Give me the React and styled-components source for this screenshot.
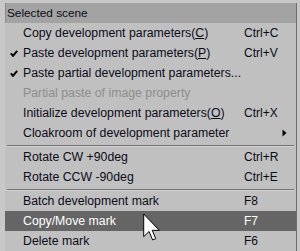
import React from "react";
import styled, { createGlobalStyle } from "styled-components";

const Global = createGlobalStyle`
  html, body { margin: 0; padding: 0; background: #c6c6c6; }
  body { font-family: "Liberation Sans", Arial, sans-serif; }
`;

const Frame = styled.div`
  position: relative;
  width: 300px;
  height: 251px;
  overflow: hidden;
  box-sizing: border-box;
  background: #c8c8c8;
  padding: 3px 3px 0 5px;
`;

const Panel = styled.div`
  display: flex;
  flex-direction: column;
  background: #c0c0c0;
  border-right: 1px solid #6e6e6e;
  height: 100%;
`;

const Header = styled.div`
  height: 20px;
  line-height: 20px;
  background: #a3a3a3;
  color: #0c0c18;
  font-size: 11.8px;
  padding-left: 2px;
  box-shadow: inset 1px 0 0 #8a8a8a;
`;

const Row = styled.div`
  display: grid;
  grid-template-columns: 18px 1fr 36px 16px;
  align-items: center;
  height: 20px;
  line-height: 20px;
  font-size: 12.3px;
  background: ${(p) => (p.$active ? "#656565" : "transparent")};
  color: ${(p) => (p.$active ? "#ffffff" : p.$disabled ? "#8e8e8e" : "#0c0c18")};
  white-space: nowrap;
`;

const CheckCell = styled.span`
  display: flex;
  align-items: center;
  padding-left: 5px;
  padding-top: 1px;
`;

const Label = styled.span``;

const Shortcut = styled.span`
  font-size: 12px;
`;

const ArrowCell = styled.span`
  display: flex;
  align-items: center;
  padding-left: 2px;
`;

const Separator = styled.div`
  height: 5px;
  display: flex;
  align-items: center;
  padding: 0 2px 0 2px;
  &::before {
    content: "";
    flex: 1;
    height: 1px;
    background: #747474;
    box-shadow: 0 1px 0 #d2d2d2;
  }
`;

const Cursor = styled.svg`
  position: absolute;
  left: 143px;
  top: 213px;
`;

const Check = () => (
  <svg width="8" height="7" viewBox="0 0 8 7">
    <path d="M0.8 3.4 L3 5.8 L7.2 0.8" fill="none" stroke="#000" strokeWidth="2" />
  </svg>
);

const SubArrow = () => (
  <svg width="5" height="8" viewBox="0 0 5 8">
    <path d="M0.5 0.5 L4.5 4 L0.5 7.5 Z" fill="#000" />
  </svg>
);

const items = [
  { label: <>Copy development parameters(<u>C</u>)</>, sc: "Ctrl+C" },
  { label: <>Paste development parameters(<u>P</u>)</>, sc: "Ctrl+V", check: true },
  { label: "Paste partial development parameters...", check: true },
  { label: "Partial paste of image property", disabled: true },
  { label: <>Initialize development parameters(<u>O</u>)</>, sc: "Ctrl+X" },
  { label: "Cloakroom of development parameter", sub: true },
  { sep: true },
  { label: "Rotate CW +90deg", sc: "Ctrl+R" },
  { label: "Rotate CCW -90deg", sc: "Ctrl+E" },
  { sep: true },
  { label: "Batch development mark", sc: "F8" },
  { label: "Copy/Move mark", sc: "F7", active: true },
  { label: "Delete mark", sc: "F6" },
];

export default function App() {
  return (
    <>
      <Global />
      <Frame>
        <Panel>
          <Header>Selected scene</Header>
          {items.map((it, i) =>
            it.sep ? (
              <Separator key={i} />
            ) : (
              <Row key={i} $active={it.active} $disabled={it.disabled}>
                <CheckCell>{it.check && <Check />}</CheckCell>
                <Label>{it.label}</Label>
                <Shortcut>{it.sc || ""}</Shortcut>
                <ArrowCell>{it.sub && <SubArrow />}</ArrowCell>
              </Row>
            )
          )}
        </Panel>
        <Cursor width="17" height="29" viewBox="0 0 12 20">
          <path
            d="M0.5 0.5 L0.5 16.5 L4.3 12.8 L6.8 18.8 L9 17.9 L6.5 12 L11.5 12 Z"
            fill="#fff"
            stroke="#000"
            strokeWidth="0.7"
            strokeLinejoin="miter"
          />
        </Cursor>
      </Frame>
    </>
  );
}
